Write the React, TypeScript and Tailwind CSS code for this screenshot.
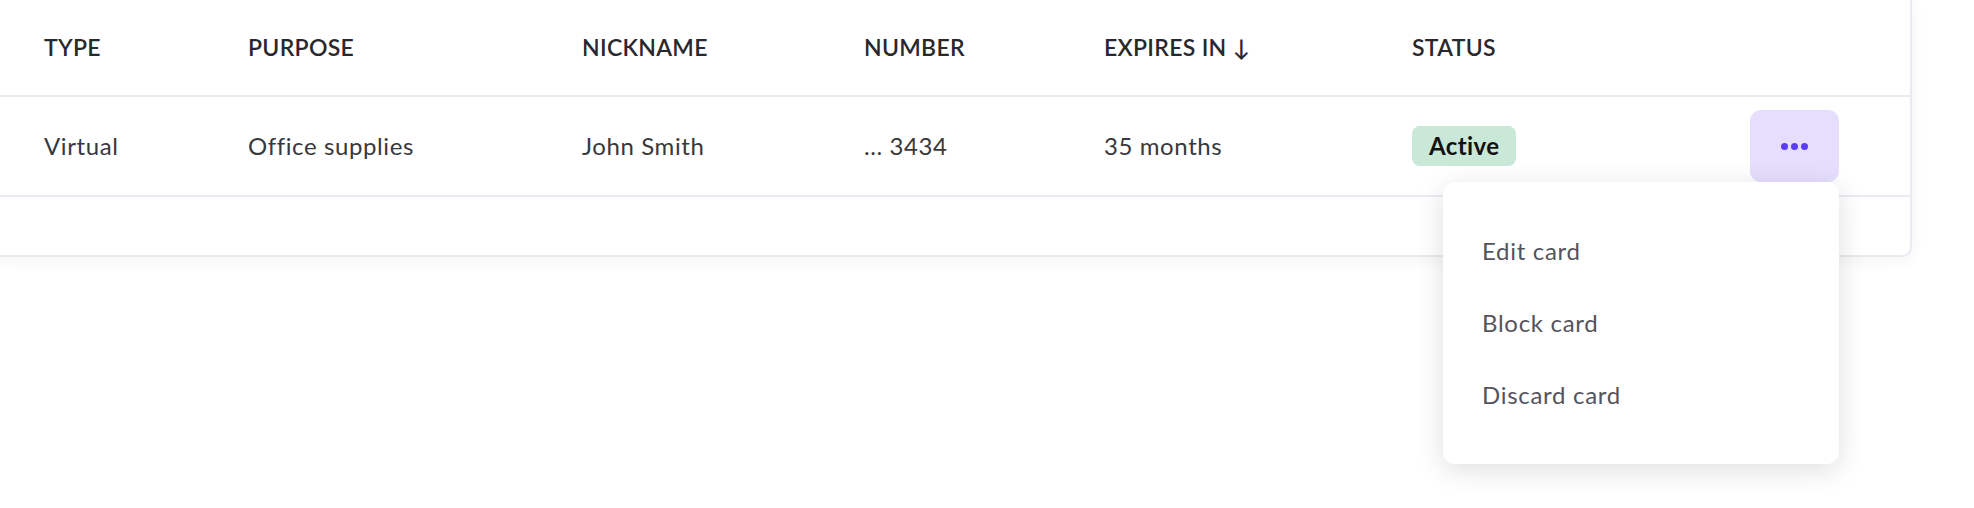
import React from 'react'

const columns = ['Type', 'Purpose', 'Nickname', 'Number', 'Expires in ↓', 'Status']

const row = {
  type: 'Virtual',
  purpose: 'Office supplies',
  nickname: 'John Smith',
  number: '... 3434',
  expires: '35 months',
}

const menuItems = ['Edit card', 'Block card', 'Discard card']

const gridCols = 'grid grid-cols-[204px_334px_282px_240px_308px_1fr] items-center pl-[52px] pr-[71px]'

export default function App() {
  return (
    <div className="w-[1974px] h-[508px] bg-white overflow-hidden font-['Lato',sans-serif]">
      <div className="relative -ml-[10px] -mt-[2px] w-[1922px] rounded-b-[10px] border-2 border-[#ebeaf0] bg-white shadow-[0_4px_14px_rgba(40,30,80,0.05)]">
        <div className={`${gridCols} h-[97px] border-b-2 border-[#ebeaf0]`}>
          {columns.map((c) => (
            <div key={c} className="text-[23px] font-semibold uppercase tracking-[0.3px] text-[#28282d]">
              {c}
            </div>
          ))}
        </div>

        <div className={`${gridCols} h-[100px] border-b-2 border-[#ebeaf0] text-[24px] tracking-[0.6px] text-[#38383d]`}>
          <div>{row.type}</div>
          <div>{row.purpose}</div>
          <div>{row.nickname}</div>
          <div>{row.number}</div>
          <div>{row.expires}</div>
          <div className="flex items-center justify-between">
            <span className="flex h-[40px] items-center rounded-[8px] bg-[#c9e8d8] px-[17px] text-[24px] font-bold tracking-[0.4px] text-[#111]">
              Active
            </span>
            <div className="relative">
              <button className="flex h-[72px] w-[89px] items-center justify-center gap-[3px] rounded-[11px] bg-[#e5defd]">
                <span className="h-[7px] w-[7px] rounded-full bg-[#5a3cf4]" />
                <span className="h-[7px] w-[7px] rounded-full bg-[#5a3cf4]" />
                <span className="h-[7px] w-[7px] rounded-full bg-[#5a3cf4]" />
              </button>
              <div className="absolute right-0 top-[72px] z-10 w-[396px] rounded-[12px] bg-white py-[33px] shadow-[0_6px_28px_rgba(0,0,0,0.13)]">
                {menuItems.map((m) => (
                  <div key={m} className="flex h-[72px] items-center pl-[39px] text-[24px] tracking-[0.7px] text-[#55535c]">
                    {m}
                  </div>
                ))}
              </div>
            </div>
          </div>
        </div>

        <div className="h-[58px]" />
      </div>
    </div>
  )
}
